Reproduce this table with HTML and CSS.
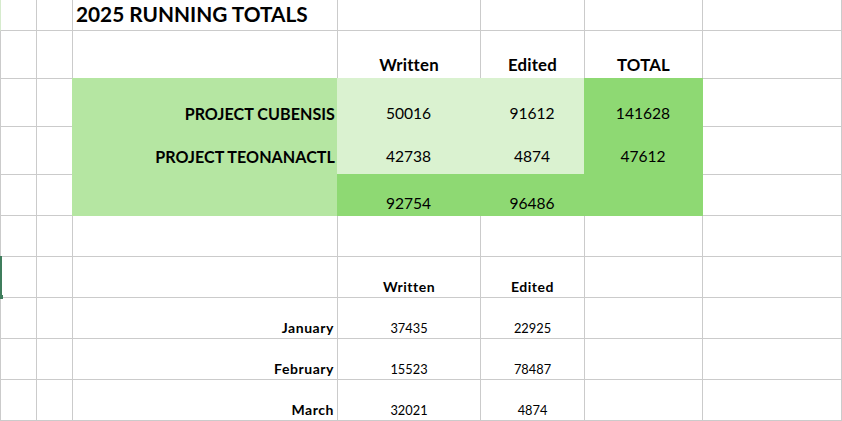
FILE: index.html
```html
<!DOCTYPE html>
<html lang="en">
<head>
<meta charset="utf-8">
<title>2025 Running Totals</title>
<link rel="stylesheet" href="styles.css">
</head>
<body>
<div class="sheet">
  <div class="row r1">
    <div class="cell a first"></div><div class="cell"></div>
    <div class="cell left title">2025 RUNNING TOTALS</div>
    <div class="cell"></div><div class="cell"></div><div class="cell"></div><div class="cell"></div>
  </div>
  <div class="row r2">
    <div class="cell a"></div><div class="cell"></div><div class="cell"></div>
    <div class="cell center head">Written</div>
    <div class="cell center head">Edited</div>
    <div class="cell center head">TOTAL</div>
    <div class="cell"></div>
  </div>
  <div class="row r3">
    <div class="cell a"></div><div class="cell"></div>
    <div class="cell right label fill-mid">PROJECT CUBENSIS</div>
    <div class="cell center num fill-light">50016</div>
    <div class="cell center num fill-light">91612</div>
    <div class="cell center num fill-dark">141628</div>
    <div class="cell"></div>
  </div>
  <div class="row r4">
    <div class="cell a"></div><div class="cell"></div>
    <div class="cell right label fill-mid">PROJECT TEONANACTL</div>
    <div class="cell center num fill-light">42738</div>
    <div class="cell center num fill-light">4874</div>
    <div class="cell center num fill-dark">47612</div>
    <div class="cell"></div>
  </div>
  <div class="row r5">
    <div class="cell a"></div><div class="cell"></div>
    <div class="cell fill-mid"></div>
    <div class="cell center num fill-dark">92754</div>
    <div class="cell center num fill-dark">96486</div>
    <div class="cell fill-dark"></div>
    <div class="cell"></div>
  </div>
  <div class="row lower">
    <div class="cell a"></div><div class="cell"></div><div class="cell"></div>
    <div class="cell"></div><div class="cell"></div><div class="cell"></div><div class="cell"></div>
  </div>
  <div class="row lower">
    <div class="cell a"></div><div class="cell"></div><div class="cell"></div>
    <div class="cell center small-head">Written</div>
    <div class="cell center small-head">Edited</div>
    <div class="cell"></div><div class="cell"></div>
  </div>
  <div class="row lower">
    <div class="cell a"></div><div class="cell"></div>
    <div class="cell right small-label">January</div>
    <div class="cell center small-num">37435</div>
    <div class="cell center small-num">22925</div>
    <div class="cell"></div><div class="cell"></div>
  </div>
  <div class="row lower">
    <div class="cell a"></div><div class="cell"></div>
    <div class="cell right small-label">February</div>
    <div class="cell center small-num">15523</div>
    <div class="cell center small-num">78487</div>
    <div class="cell"></div><div class="cell"></div>
  </div>
  <div class="row lower">
    <div class="cell a"></div><div class="cell"></div>
    <div class="cell right small-label">March</div>
    <div class="cell center small-num">32021</div>
    <div class="cell center small-num">4874</div>
    <div class="cell"></div><div class="cell"></div>
  </div>
  <div class="selection"><span class="handle"></span></div>
</div>
</body>
</html>
```
FILE: styles.css
```css
html, body {
  margin: 0;
  padding: 0;
  background: #ffffff;
}

body {
  width: 842px;
  height: 421px;
  overflow: hidden;
  font-family: Lato, "Open Sans", sans-serif;
  color: #000000;
}

.sheet {
  position: relative;
  display: grid;
  grid-template-columns: 37px 36px 265px 143px 104px 118px 139px;
  grid-template-rows: 31px 48px 48px 48px 41px 41px 41px 41px 41px 41px;
  width: 842px;
}

.row {
  display: contents;
}

.cell {
  box-sizing: border-box;
  border-right: 1px solid #cbcbcb;
  border-bottom: 1px solid #cbcbcb;
  display: flex;
  align-items: flex-end;
  white-space: nowrap;
  line-height: 1;
  min-width: 0;
}

.cell.a {
  border-left: 1px solid #cbcbcb;
}

.cell.a.first {
  border-left-color: #d6ebcd;
}

.left { justify-content: flex-start; }
.center { justify-content: center; }
.right { justify-content: flex-end; }

.fill-mid,
.fill-light,
.fill-dark {
  border-color: transparent;
  margin: -1px 0 0 -1px;
}

.fill-mid { background: #b5e6a2; }
.fill-light { background: #daf2d0; }
.fill-dark { background: #8ed973; }

.r1 > .cell { padding-bottom: 5px; }
.r2 > .cell { padding-bottom: 4px; }
.r3 > .cell { padding-bottom: 4px; }
.r4 > .cell { padding-bottom: 9px; }
.r5 > .cell { padding-bottom: 3px; }
.lower > .cell { padding-bottom: 3px; }

.title {
  font-size: 20.8px;
  font-weight: 700;
  padding-left: 3px;
  overflow: visible;
}

.head {
  font-size: 16.8px;
  font-weight: 700;
  letter-spacing: 0.2px;
}

.label {
  font-size: 16.1px;
  font-weight: 700;
  letter-spacing: 0.05px;
  padding-right: 2px;
}

.num {
  font-size: 15.6px;
}

.small-head {
  font-size: 14px;
  font-weight: 700;
  letter-spacing: 0.5px;
}

.small-label {
  font-size: 14px;
  font-weight: 700;
  letter-spacing: 0.55px;
  padding-right: 3px;
}

.small-num {
  font-size: 12.8px;
}

.selection {
  position: absolute;
  left: 0;
  top: 256px;
  width: 2px;
  height: 42px;
  background: #3f7d5c;
}

.handle {
  position: absolute;
  left: 0;
  bottom: -1px;
  width: 3px;
  height: 4px;
  background: #3f7d5c;
}
```
